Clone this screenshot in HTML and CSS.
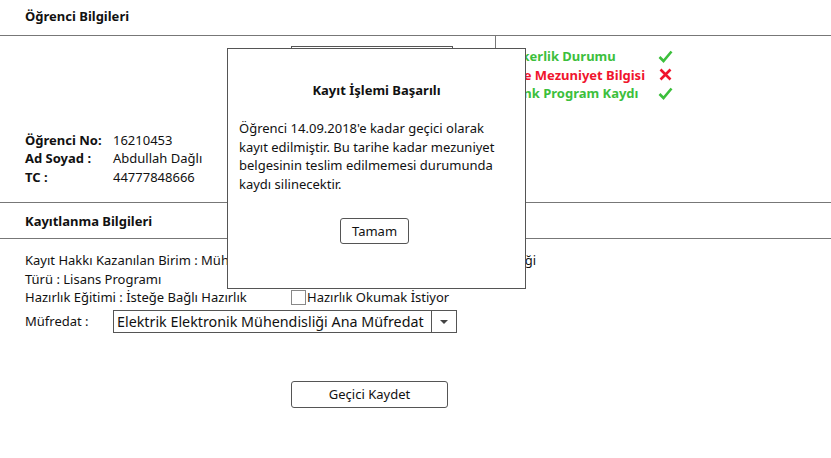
FILE: index.html
```html
<!DOCTYPE html>
<html lang="tr">
<head>
    <meta charset="UTF-8">
    <title>Öğrenci Kayıt</title>
    <link rel="stylesheet" href="styles.css">
</head>
<body>
    <div class="page">
        <div class="section-head first">Öğrenci Bilgileri</div>

        <div class="student">
            <div class="student-left">
                <div class="info">
                    <div class="info-row"><span class="key">Öğrenci No:</span><span>16210453</span></div>
                    <div class="info-row"><span class="key">Ad Soyad :</span><span>Abdullah Dağlı</span></div>
                    <div class="info-row"><span class="key">TC :</span><span>44777848666</span></div>
                </div>
                <div class="photo"></div>
            </div>
            <div class="student-right">
                <div class="check-row ok">
                    <span class="check-label">Askerlik Durumu</span>
                    <svg width="15" height="15" viewBox="0 0 15 15"><path d="M1.5 8 L5.5 12 L13.5 2.5" fill="none" stroke="#3cbf3c" stroke-width="2.6"/></svg>
                </div>
                <div class="check-row bad">
                    <span class="check-label">Lise Mezuniyet Bilgisi</span>
                    <svg width="15" height="15" viewBox="0 0 15 15"><path d="M2.5 2.5 L12.5 12.5 M12.5 2.5 L2.5 12.5" fill="none" stroke="#f0142d" stroke-width="2.6"/></svg>
                </div>
                <div class="check-row ok">
                    <span class="check-label">Denk Program Kaydı</span>
                    <svg width="15" height="15" viewBox="0 0 15 15"><path d="M1.5 8 L5.5 12 L13.5 2.5" fill="none" stroke="#3cbf3c" stroke-width="2.6"/></svg>
                </div>
            </div>
        </div>

        <div class="section-head">Kayıtlanma Bilgileri</div>

        <div class="register">
            <div class="line">Kayıt Hakkı Kazanılan Birim : Mühendislik Fakültesi / Elektrik Elektronik Mühendisliği</div>
            <div class="line">Türü : Lisans Programı</div>
            <div class="line">
                <span class="prep">Hazırlık Eğitimi : İsteğe Bağlı Hazırlık</span>
                <span class="checkbox"></span>
                <span>Hazırlık Okumak İstiyor</span>
            </div>
            <div class="line curriculum">
                <span class="cur-label">Müfredat :</span>
                <div class="select">
                    <span class="select-text">Elektrik Elektronik Mühendisliği Ana Müfredat</span>
                    <span class="select-arrow"></span>
                </div>
            </div>
            <button class="save-btn">Geçici Kaydet</button>
        </div>

        <div class="modal">
            <div class="modal-title">Kayıt İşlemi Başarılı</div>
            <p class="modal-text">Öğrenci 14.09.2018'e kadar geçici olarak kayıt edilmiştir. Bu tarihe kadar mezuniyet belgesinin teslim edilmemesi durumunda kaydı silinecektir.</p>
            <div class="modal-actions">
                <button class="ok-btn">Tamam</button>
            </div>
        </div>
    </div>
</body>
</html>
```

FILE: styles.css
```css
body {
    margin: 0;
    font-family: "Noto Sans", "Open Sans", sans-serif;
    font-size: 13px;
    color: #111;
    background-color: white;
}
.page {
    position: relative;
    width: 831px;
    height: 458px;
}
.section-head {
    font-weight: bold;
    padding-left: 25px;
    height: 36px;
    line-height: 36px;
    border-bottom: 1px solid #777;
    box-sizing: border-box;
}
.section-head.first {
    height: 36px;
    line-height: 32px;
}
.student {
    display: flex;
    height: 166px;
    border-bottom: 1px solid #777;
}
.student-left {
    width: 495px;
    display: flex;
    padding-left: 25px;
    box-sizing: border-box;
}
.info {
    width: 266px;
    align-self: flex-end;
    padding-bottom: 16px;
}
.info-row {
    display: flex;
    line-height: 18.5px;
}
.key {
    font-weight: bold;
    width: 88px;
}
.photo {
    width: 160px;
    height: 145px;
    margin-top: 10px;
    border: 1px solid #555;
}
.student-right {
    border-left: 1px solid #777;
    padding: 11px 0 0 10px;
}
.check-row {
    display: flex;
    align-items: center;
    height: 18.5px;
    font-weight: bold;
}
.check-label {
    width: 152px;
}
.ok {
    color: #3cbf3c;
}
.bad {
    color: #f0142d;
}
.register {
    padding: 12px 0 0 25px;
}
.line {
    display: flex;
    align-items: center;
    line-height: 18.5px;
}
.prep {
    width: 266px;
}
.checkbox {
    width: 13px;
    height: 13px;
    border: 1px solid #888;
    margin-right: 1px;
}
.curriculum {
    margin-top: 3px;
}
.cur-label {
    width: 88px;
}
.select {
    display: flex;
    width: 344px;
    height: 23px;
    border: 1px solid #555;
    box-sizing: border-box;
}
.select-text {
    flex: 1;
    font-size: 14.3px;
    line-height: 21px;
    padding-left: 3px;
    white-space: nowrap;
    overflow: hidden;
}
.select-arrow {
    width: 24px;
    border-left: 1px solid #555;
    position: relative;
}
.select-arrow::after {
    content: "";
    position: absolute;
    left: 8px;
    top: 9px;
    border-left: 4px solid transparent;
    border-right: 4px solid transparent;
    border-top: 4px solid #444;
}
.save-btn {
    display: block;
    margin: 48px 0 0 266px;
    width: 157px;
    height: 27px;
    background-color: white;
    border: 1px solid #555;
    border-radius: 3px;
    font-family: inherit;
    font-size: 13px;
    color: #111;
}
.modal {
    position: absolute;
    left: 227px;
    top: 48px;
    width: 299px;
    height: 241px;
    box-sizing: border-box;
    border: 1px solid #555;
    background-color: white;
    padding: 0 11px;
}
.modal-title {
    font-weight: bold;
    text-align: center;
    margin-top: 31px;
    line-height: 20px;
}
.modal-text {
    margin: 19px 0 0 0;
    line-height: 18.5px;
}
.modal-actions {
    text-align: center;
    margin-top: 25px;
}
.ok-btn {
    width: 69px;
    height: 26px;
    background-color: white;
    border: 1px solid #555;
    border-radius: 3px;
    font-family: inherit;
    font-size: 13px;
    color: #111;
    margin-right: 4px;
}
```
